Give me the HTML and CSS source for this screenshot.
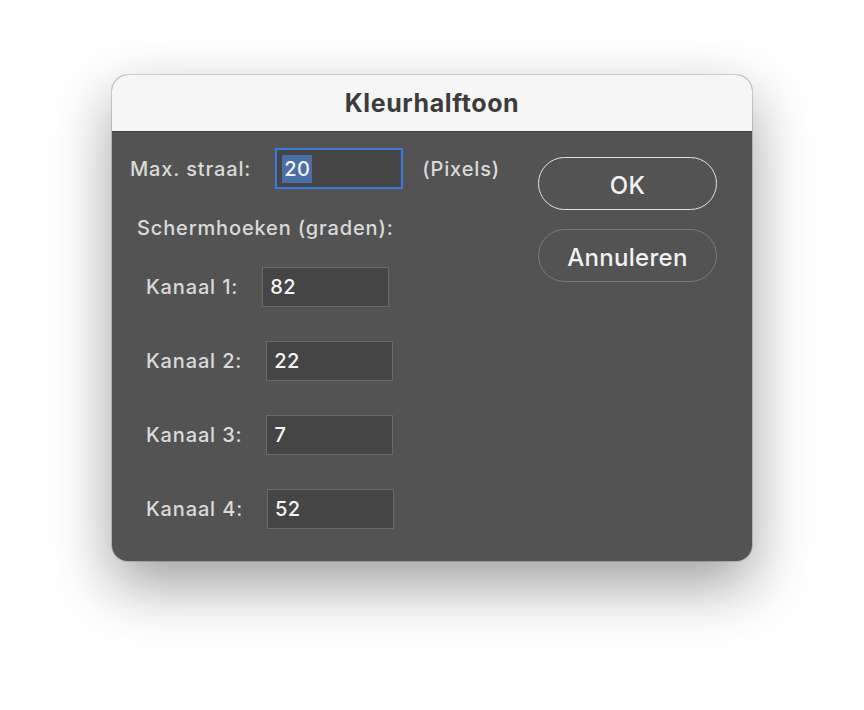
FILE: index.html
```html
<!DOCTYPE html>
<html lang="nl">
<head>
  <meta charset="UTF-8">
  <title>Kleurhalftoon</title>
  <link rel="stylesheet" href="styles.css">
</head>
<body>
  <div class="dialog">
    <div class="titlebar">Kleurhalftoon</div>
    <div class="content">
      <div class="form">
        <div class="row radius-row">
          <span class="label">Max. straal:</span>
          <span class="field focused"><span class="selection">20</span></span>
          <span class="unit">(Pixels)</span>
        </div>
        <div class="group-title">Schermhoeken (graden):</div>
        <div class="row channel">
          <span class="label">Kanaal 1:</span>
          <span class="field">82</span>
        </div>
        <div class="row channel">
          <span class="label">Kanaal 2:</span>
          <span class="field">22</span>
        </div>
        <div class="row channel">
          <span class="label">Kanaal 3:</span>
          <span class="field">7</span>
        </div>
        <div class="row channel">
          <span class="label">Kanaal 4:</span>
          <span class="field">52</span>
        </div>
      </div>
      <div class="buttons">
        <button class="btn btn-default">OK</button>
        <button class="btn">Annuleren</button>
      </div>
    </div>
  </div>
</body>
</html>
```

FILE: styles.css
```css
html, body {
  margin: 0;
  background: #ffffff;
}
body {
  font-family: Inter, "Liberation Sans", sans-serif;
  padding: 75px 0 0 112px;
  box-sizing: border-box;
  min-height: 100vh;
}
.dialog {
  width: 640px;
  height: 486px;
  border-radius: 16px;
  background: #535353;
  overflow: hidden;
  box-shadow: 0 0 0 1px rgba(0, 0, 0, 0.15), 0 24px 60px rgba(0, 0, 0, 0.38);
  display: flex;
  flex-direction: column;
}
.titlebar {
  height: 56px;
  background: #f6f6f6;
  border-bottom: 1px solid #3a3a3a;
  color: #3c3c3c;
  font-weight: 700;
  font-size: 25px;
  letter-spacing: 0.6px;
  display: flex;
  align-items: center;
  justify-content: center;
}
.content {
  flex: 1;
  display: flex;
  justify-content: space-between;
  padding: 16px 35px 0 18px;
}
.form {
  display: flex;
  flex-direction: column;
}
.row {
  display: flex;
  align-items: center;
}
.label, .unit, .group-title {
  color: #dadada;
  font-size: 20px;
  font-weight: 500;
  letter-spacing: 0.85px;
}
.field {
  box-sizing: border-box;
  width: 127px;
  height: 40px;
  margin-left: 24px;
  padding-left: 7px;
  background: #454545;
  border: 1px solid #6a6a6a;
  color: #f4f4f4;
  font-size: 20px;
  font-weight: 500;
  letter-spacing: 0.4px;
  display: flex;
  align-items: center;
}
.field.focused {
  width: 128px;
  height: 41px;
  padding-left: 5px;
  border: 2px solid #3b79df;
}
.selection {
  background: #4a6fa6;
  padding: 0 2px;
  line-height: 28px;
}
.unit {
  margin-left: 19px;
}
.group-title {
  margin: 27px 0 27px 7px;
  line-height: 24px;
}
.channel {
  margin-left: 16px;
}
.channel + .channel {
  margin-top: 34px;
}
.buttons {
  display: flex;
  flex-direction: column;
  gap: 19px;
  padding-top: 9px;
}
.btn {
  width: 179px;
  height: 53px;
  padding: 3px 0 0;
  border-radius: 27px;
  background: transparent;
  border: 1.5px solid #7b7b7b;
  color: #f2f2f2;
  font-family: Inter, "Liberation Sans", sans-serif;
  font-size: 24px;
  font-weight: 500;
  letter-spacing: 0.3px;
}
.btn-default {
  border-color: #e2e2e2;
}
```
